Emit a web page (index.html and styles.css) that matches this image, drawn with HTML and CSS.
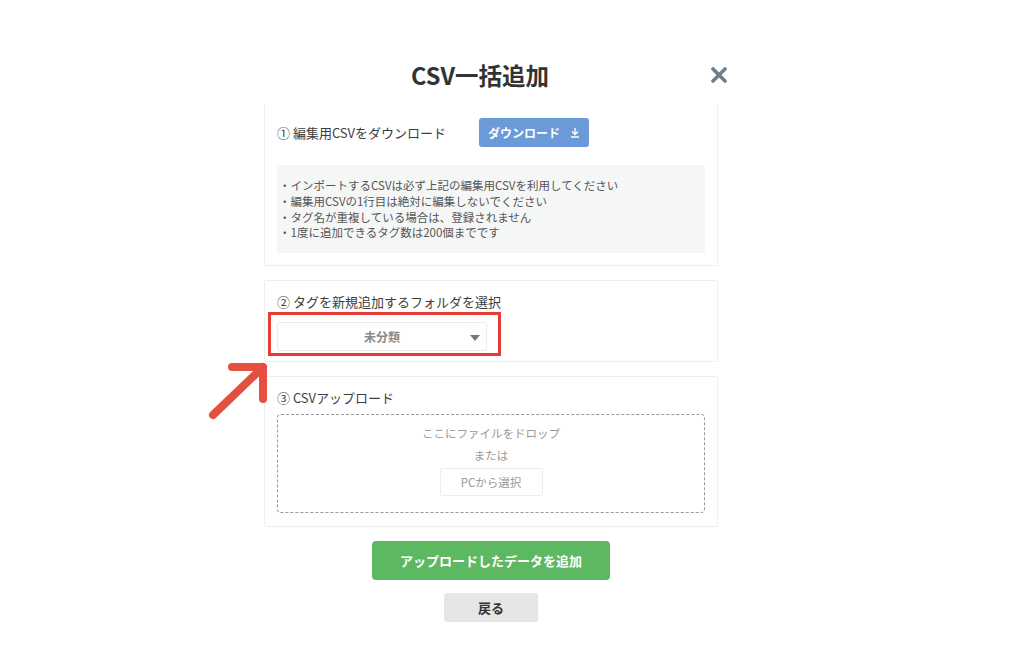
FILE: index.html
```html
<!DOCTYPE html>
<html>
  <head>
    <meta charset="utf-8" />
    <title>CSV一括追加</title>
    <link rel="stylesheet" href="styles.css">
  </head>
  <body>
    <div class="modal">
      <div class="modal-head">
        <h1>CSV一括追加</h1>
        <svg class="close" width="16" height="16" viewBox="0 0 16 16">
          <path d="M2 2 L14 14 M14 2 L2 14" stroke="#6e7f86" stroke-width="3.6" stroke-linecap="round" />
        </svg>
      </div>

      <div class="card card-first">
        <div class="step-row">
          <span class="step">① 編集用CSVをダウンロード</span>
          <button class="btn-download">ダウンロード
            <svg width="10" height="11" viewBox="0 0 10 11">
              <path d="M5 1 V7 M2 4.5 L5 7.5 L8 4.5 M1 10 H9" stroke="#fff" stroke-width="1.4" fill="none" />
            </svg>
          </button>
        </div>
        <div class="notes">
          <p>・インポートするCSVは必ず上記の編集用CSVを利用してください</p>
          <p>・編集用CSVの1行目は絶対に編集しないでください</p>
          <p>・タグ名が重複している場合は、登録されません</p>
          <p>・1度に追加できるタグ数は200個までです</p>
        </div>
      </div>

      <div class="card card-folder">
        <div class="step">② タグを新規追加するフォルダを選択</div>
        <div class="select">
          <span>未分類</span>
          <i class="caret"></i>
        </div>
        <div class="highlight"></div>
      </div>

      <div class="card">
        <div class="step">③ CSVアップロード</div>
        <div class="dropzone">
          <p>ここにファイルをドロップ</p>
          <p class="or">または</p>
          <button class="btn-pc">PCから選択</button>
        </div>
      </div>

      <div class="actions">
        <button class="btn-add">アップロードしたデータを追加</button>
        <button class="btn-back">戻る</button>
      </div>
    </div>

    <svg class="arrow" width="70" height="70" viewBox="0 0 70 70">
      <path d="M8 57 L58 9 M27 9 H58 V41" stroke="#e4503f" stroke-width="8" stroke-linecap="round" stroke-linejoin="round" fill="none" />
    </svg>
  </body>
</html>
```

FILE: styles.css
```css
body {
  margin: 0;
  background: #fff;
  font-family: "Noto Sans CJK JP", "Noto Sans", sans-serif;
  color: #444;
  position: relative;
}
p {
  margin: 0;
}
button {
  font-family: inherit;
  border: none;
  cursor: pointer;
}
.modal {
  width: 454px;
  margin-left: 264px;
  padding-top: 55px;
}
.modal-head {
  position: relative;
  width: 480px;
  margin-left: -24px;
  height: 40px;
  margin-bottom: 9px;
}
.modal-head h1 {
  margin: 0;
  text-align: center;
  font-size: 23.5px;
  line-height: 40px;
  font-weight: bold;
  color: #333;
}
.close {
  position: absolute;
  right: -7px;
  top: 12px;
}
.card {
  border: 1px solid #eeeeee;
  border-radius: 2px;
  padding: 11px 12px 13px;
  margin-bottom: 14px;
}
.card-first {
  border-top: none;
  padding-top: 14px;
  padding-bottom: 12px;
}
.step {
  font-size: 13px;
  line-height: 20px;
  color: #3d3d3d;
}
.step-row {
  display: flex;
  align-items: center;
  height: 29px;
}
.step-row .step {
  width: 202px;
}
.btn-download {
  width: 110px;
  height: 29px;
  border-radius: 3px;
  background: #6a9bd8;
  color: #fff;
  font-size: 12px;
  font-weight: bold;
  display: flex;
  align-items: center;
  justify-content: center;
  gap: 10px;
  padding: 0;
}
.notes {
  margin-top: 18px;
  background: #f5f7f7;
  padding: 13px 10px 12px 2px;
  font-size: 11.5px;
  line-height: 15.8px;
  color: #555;
}
.card-folder {
  position: relative;
  padding-bottom: 10px;
}
.select {
  margin-top: 10px;
  width: 208px;
  height: 27px;
  border: 1px solid #ececec;
  border-radius: 3px;
  position: relative;
  display: flex;
  align-items: center;
  justify-content: center;
  font-size: 12px;
  font-weight: bold;
  color: #8a8a8a;
}
.caret {
  position: absolute;
  right: 6px;
  top: 12px;
  width: 0;
  height: 0;
  border-left: 5px solid transparent;
  border-right: 5px solid transparent;
  border-top: 6px solid #777;
}
.highlight {
  position: absolute;
  left: 3px;
  top: 31px;
  width: 227px;
  height: 38px;
  border: 3px solid #e53d36;
}
.dropzone {
  margin-top: 6px;
  border: 1px dashed #999;
  border-radius: 4px;
  padding-top: 9px;
  height: 88px;
  display: flex;
  flex-direction: column;
  align-items: center;
  font-size: 11.5px;
  line-height: 18px;
  color: #999;
}
.dropzone .or {
  margin-top: 4px;
}
.btn-pc {
  margin-top: 4px;
  width: 103px;
  height: 28px;
  background: #fff;
  border: 1px solid #eeeeee;
  border-radius: 2px;
  font-size: 11.5px;
  color: #999;
}
.actions {
  display: flex;
  flex-direction: column;
  align-items: center;
  gap: 13px;
}
.btn-add {
  width: 238px;
  height: 39px;
  border-radius: 4px;
  background: #5cb962;
  color: #fff;
  font-size: 13px;
  font-weight: bold;
}
.btn-back {
  width: 94px;
  height: 29px;
  border-radius: 3px;
  background: #e6e6e6;
  color: #333;
  font-size: 13px;
  font-weight: bold;
}
.arrow {
  position: absolute;
  left: 205px;
  top: 358px;
}
```
